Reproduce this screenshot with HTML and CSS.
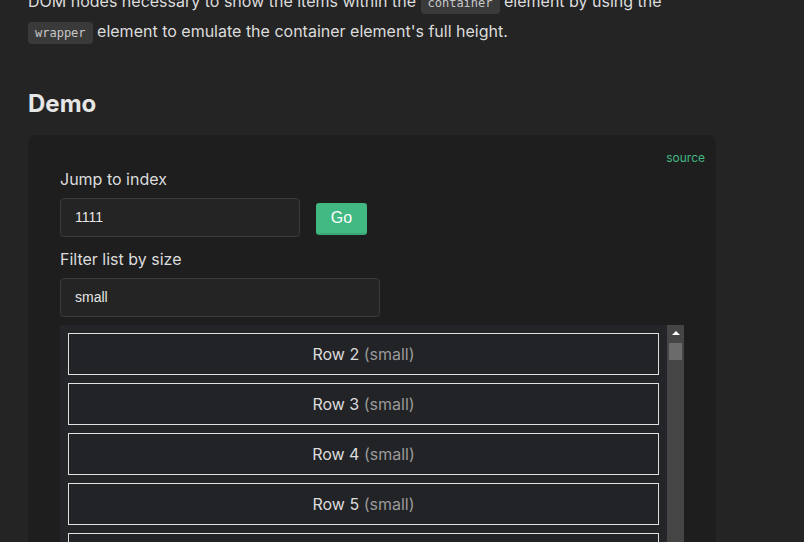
FILE: index.html
```html
<!DOCTYPE html>
<html lang="en">
<head>
<meta charset="utf-8">
<title>Virtual list demo</title>
<link rel="stylesheet" href="styles.css">
</head>
<body>
<main class="page">
  <p class="prose">DOM nodes necessary to show the items within the <code>container</code> element by using the <code>wrapper</code> element to emulate the container element's full height.</p>
  <h2 class="heading">Demo</h2>
  <section class="demo">
    <div class="source-row"><a class="source" href="#">source</a></div>
    <label class="label">Jump to index</label>
    <div class="jump-row">
      <div class="input input-short">1111</div>
      <button class="go">Go</button>
    </div>
    <label class="label">Filter list by size</label>
    <div class="input input-long">small</div>
    <div class="list">
      <div class="rows">
        <div class="row">Row 2 <span class="size">(small)</span></div>
        <div class="row">Row 3 <span class="size">(small)</span></div>
        <div class="row">Row 4 <span class="size">(small)</span></div>
        <div class="row">Row 5 <span class="size">(small)</span></div>
        <div class="row">Row 6 <span class="size">(small)</span></div>
      </div>
      <div class="scrollbar">
        <div class="arrow"></div>
        <div class="thumb"></div>
      </div>
    </div>
  </section>
</main>
</body>
</html>
```
FILE: styles.css
```css
html, body {
  margin: 0;
  height: 100%;
  overflow: hidden;
  background: #242424;
}
body {
  font-family: Inter, "Noto Sans", sans-serif;
  color: #dcdcdc;
}
.page {
  width: 688px;
  padding-left: 28px;
}
.prose {
  margin: -13px 0 0;
  font-size: 16px;
  line-height: 28px;
  color: #dcdcdc;
}
.prose code {
  font-family: "DejaVu Sans Mono", monospace;
  font-size: 12px;
  background: #3a3a3a;
  color: #c8c8c8;
  border-radius: 4px;
  padding: 4px 7px;
}
.heading {
  margin: 41px 0 15px;
  font-size: 24px;
  line-height: 32px;
  font-weight: 700;
  color: #e6e6e6;
}
.demo {
  background: #1e1e1e;
  border-radius: 8px;
  padding: 13px 32px 0 32px;
  height: 420px;
}
.source-row {
  text-align: right;
  margin-right: -21px;
  line-height: 16px;
}
.source {
  font-size: 12px;
  color: #42b883;
  text-decoration: none;
}
.label {
  display: block;
  margin-top: 1px;
  font-size: 16px;
  line-height: 24px;
  color: #dcdcdc;
}
.label + .input, .label + .jump-row {
  margin-top: 7px;
}
.jump-row + .label {
  margin-top: 10px;
}
.jump-row {
  display: flex;
  align-items: center;
  gap: 16px;
}
.input {
  box-sizing: border-box;
  height: 39px;
  border: 1px solid #3b3b3b;
  border-radius: 4px;
  background: #242424;
  padding: 0 14px;
  font-family: "Liberation Sans", Arial, sans-serif;
  font-size: 14px;
  line-height: 37px;
  color: #e6e6e6;
}
.input-short { width: 240px; }
.input-long { width: 320px; }
.go {
  box-sizing: border-box;
  margin-top: 3px;
  width: 51px;
  height: 32px;
  border: 0;
  border-bottom: 2px solid #3aa577;
  border-radius: 3px;
  background: #42b883;
  color: #ffffff;
  font-family: "Liberation Sans", Arial, sans-serif;
  font-size: 16px;
  padding: 0;
}
.list {
  margin-top: 8px;
  width: 624px;
  height: 260px;
  background: #242528;
  display: flex;
  gap: 8px;
  overflow: hidden;
}
.rows {
  flex: 1;
  padding: 8px 0 0 8px;
  display: flex;
  flex-direction: column;
  gap: 8px;
}
.row {
  flex: none;
  box-sizing: border-box;
  height: 42px;
  border: 1px solid #e0e0e0;
  background: #222326;
  display: flex;
  align-items: center;
  justify-content: center;
  font-size: 16px;
  color: #dcdcdc;
  white-space: pre;
}
.size {
  color: #9a9a9a;
}
.scrollbar {
  flex: none;
  width: 17px;
  background: #454545;
  display: flex;
  flex-direction: column;
  align-items: center;
}
.arrow {
  margin-top: 6px;
  width: 0;
  height: 0;
  border-left: 4px solid transparent;
  border-right: 4px solid transparent;
  border-bottom: 4px solid #ffffff;
}
.thumb {
  margin-top: 8px;
  width: 13px;
  height: 17px;
  background: #6b6b6b;
}
```
